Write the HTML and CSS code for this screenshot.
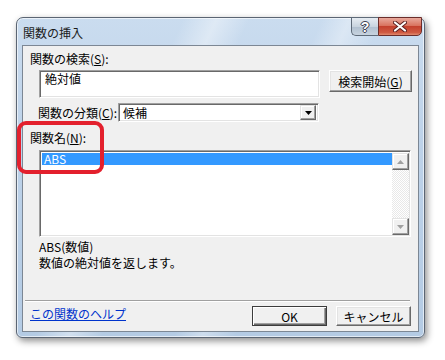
FILE: index.html
```html
<!DOCTYPE html>
<html lang="ja">
<head>
<meta charset="utf-8">
<link rel="stylesheet" href="styles.css">
</head>
<body>
<div class="page">
  <div class="window">
    <div class="titlebar">
      <span class="title">関数の挿入</span>
      <div class="caption-btns">
        <div class="cbtn help">?</div>
        <div class="cbtn close">
          <svg width="14" height="11" viewBox="0 0 14 11"><path d="M2 1.5 L12 9.5 M12 1.5 L2 9.5" stroke="#5a2020" stroke-width="4" stroke-linecap="round"/><path d="M2 1.5 L12 9.5 M12 1.5 L2 9.5" stroke="#fff" stroke-width="2.2" stroke-linecap="round"/></svg>
        </div>
      </div>
    </div>
    <div class="content">
      <div class="label l1">関数の検索(<u>S</u>):</div>
      <div class="row search-row">
        <div class="textbox sunken">絶対値</div>
        <div class="btn search-btn">検索開始(<u>G</u>)</div>
      </div>
      <div class="row cat-row">
        <div class="label cat-label">関数の分類(<u>C</u>):</div>
        <div class="select sunken">
          <span class="sel-text">候補</span>
          <div class="drop-btn"><svg width="7" height="4" viewBox="0 0 7 4"><path d="M0 0 H7 L3.5 4 Z" fill="#000"/></svg></div>
        </div>
      </div>
      <div class="label l2">関数名(<u>N</u>):</div>
      <div class="listbox sunken">
        <div class="items">
          <div class="item selected">ABS</div>
        </div>
        <div class="scrollbar">
          <div class="sbtn"><svg width="7" height="4" viewBox="0 0 7 4"><path d="M3.5 0 L7 4 H0 Z" fill="#a0a0a0"/></svg></div>
          <div class="track"></div>
          <div class="sbtn"><svg width="7" height="4" viewBox="0 0 7 4"><path d="M0 0 H7 L3.5 4 Z" fill="#a0a0a0"/></svg></div>
        </div>
      </div>
      <div class="desc">
        <div class="desc-line">ABS(数値)</div>
        <div class="desc-line">数値の絶対値を返します。</div>
      </div>
      <div class="separator"></div>
      <div class="footer">
        <a class="help-link">この関数のヘルプ</a>
        <div class="btn ok">OK</div>
        <div class="btn cancel">キャンセル</div>
      </div>
    </div>
  </div>
  <div class="annotation"></div>
</div>
</body>
</html>
```

FILE: styles.css
```css
* { box-sizing: border-box; }
html, body {
  margin: 0;
  padding: 0;
  background: #ffffff;
  width: 445px;
  height: 360px;
  overflow: hidden;
  font-family: "Noto Sans CJK JP", "Liberation Sans", sans-serif;
  font-size: 12px;
  color: #000;
}
.page {
  position: relative;
  padding: 17px 0 0 16px;
  width: 445px;
  height: 360px;
}
.window {
  width: 409px;
  height: 321px;
  border: 1px solid #5b6573;
  border-radius: 7px 7px 6px 6px;
  padding: 0 5px 5px 5px;
  display: flex;
  flex-direction: column;
  background:
    linear-gradient(115deg, rgba(255,255,255,0) 30%, rgba(255,255,255,0.4) 36%, rgba(255,255,255,0) 42%, rgba(255,255,255,0) 55%, rgba(255,255,255,0.35) 60%, rgba(255,255,255,0) 66%),
    linear-gradient(180deg, #cadcef 0%, #bdd2e9 40%, #b4cbe4 100%);
  box-shadow: 2px 3px 7px rgba(0,0,0,0.45), inset 0 0 0 1px rgba(255,255,255,0.6);
}
.titlebar {
  height: 27px;
  display: flex;
  align-items: center;
  flex-shrink: 0;
}
.title {
  padding-left: 1px;
  padding-top: 1px;
  font-size: 12px;
  color: #1a1a1a;
}
.caption-btns {
  margin-left: auto;
  margin-right: -3px;
  align-self: flex-start;
  margin-top: -1px;
  display: flex;
}
.cbtn {
  height: 19px;
  display: flex;
  align-items: center;
  justify-content: center;
  border: 1px solid #5e6a78;
}
.help {
  width: 27px;
  border-right: none;
  border-radius: 0 0 0 5px;
  background: linear-gradient(180deg, #e6ecf2 0%, #c9d4df 50%, #b0bfcf 51%, #c7d3df 100%);
  color: #ffffff;
  font-family: "Liberation Sans", sans-serif;
  font-weight: bold;
  font-size: 14px;
  text-shadow: 0 0 1px #334, 1px 0 0 #445, -1px 0 0 #445, 0 1px 0 #445, 0 -1px 0 #445;
}
.close {
  width: 44px;
  border-color: #6b2d2a;
  border-radius: 0 0 5px 0;
  background: linear-gradient(180deg, #e9a99c 0%, #d9735f 45%, #c4412e 50%, #cf5a42 85%, #e08b6f 100%);
}
.content {
  flex: 1;
  background: #f0f0f0;
  border: 1px solid #7c8794;
  display: flex;
  flex-direction: column;
}
.label { line-height: 14px; height: 14px; white-space: nowrap; }
.l1 { margin: 6px 0 0 7px; }
.row { display: flex; }
.sunken {
  background: #fff;
  border-top: 1px solid #a0a0a0;
  border-left: 1px solid #a0a0a0;
  border-right: 1px solid #ffffff;
  border-bottom: 1px solid #ffffff;
  box-shadow: inset 1px 1px 0 #696969, inset -1px -1px 0 #e3e3e3;
}
.search-row { margin: 4px 0 0 16px; align-items: flex-start; height: 28px; }
.textbox {
  width: 281px;
  height: 28px;
  padding: 1px 0 0 5px;
  line-height: 14px;
}
.btn {
  display: flex;
  align-items: center;
  justify-content: center;
  background: #f0f0f0;
  border-top: 1px solid #ffffff;
  border-left: 1px solid #ffffff;
  border-right: 1px solid #696969;
  border-bottom: 1px solid #696969;
  box-shadow: inset -1px -1px 0 #a0a0a0, inset 1px 1px 0 #e3e3e3;
  white-space: nowrap;
}
.search-btn {
  margin-left: 9px;
  width: 83px;
  height: 22px;
}
.cat-row { margin: 5px 0 0 15px; align-items: center; height: 19px; }
.cat-label { width: 80px; }
.select {
  width: 201px;
  height: 19px;
  display: flex;
  align-items: center;
  padding: 0 2px 0 4px;
}
.sel-text { flex: 1; line-height: 14px; }
.drop-btn {
  width: 16px;
  height: 15px;
  display: flex;
  align-items: center;
  justify-content: center;
  background: #f0f0f0;
  border-top: 1px solid #e3e3e3;
  border-left: 1px solid #e3e3e3;
  border-right: 1px solid #696969;
  border-bottom: 1px solid #696969;
  box-shadow: inset -1px -1px 0 #a0a0a0, inset 1px 1px 0 #fff;
}
.l2 { margin: 9px 0 0 7px; }
.listbox {
  margin: 5px 0 0 16px;
  width: 372px;
  height: 87px;
  display: flex;
  padding: 2px 1px 1px 2px;
}
.items { flex: 1; }
.item {
  height: 12px;
  line-height: 12px;
  padding-left: 2px;
  font-size: 12px;
}
.selected { background: #3399ff; color: #fff; }
.scrollbar {
  width: 17px;
  display: flex;
  flex-direction: column;
}
.sbtn {
  height: 17px;
  display: flex;
  align-items: center;
  justify-content: center;
  background: #f0f0f0;
  border-top: 1px solid #e3e3e3;
  border-left: 1px solid #e3e3e3;
  border-right: 1px solid #696969;
  border-bottom: 1px solid #696969;
  box-shadow: inset -1px -1px 0 #a0a0a0, inset 1px 1px 0 #fff;
}
.track {
  flex: 1;
  background-color: #f4f4f4;
  background-image: repeating-conic-gradient(#ffffff 0 25%, #e8e8e8 0 50%);
  background-size: 2px 2px;
}
.desc {
  margin: 2px 0 0 16px;
}
.desc-line { height: 16px; line-height: 16px; }
.separator {
  margin: auto 8px 0 2px;
  height: 2px;
  border-top: 1px solid #a0a0a0;
  border-bottom: 1px solid #ffffff;
}
.footer {
  display: flex;
  align-items: center;
  height: 29px;
  padding: 4px 0 5px 7px;
}
.help-link {
  color: #0033cc;
  text-decoration: underline;
  margin-right: auto;
  margin-top: -4px;
  line-height: 14px;
}
.ok, .cancel {
  width: 75px;
  height: 20px;
}
.ok {
  border: 1px solid #3c3c3c;
  box-shadow: inset 1px 1px 0 #fff, inset -1px -1px 0 #696969, inset -2px -2px 0 #a0a0a0;
}
.cancel { margin: 0 7px 0 9px; }
.annotation {
  position: absolute;
  left: 17px;
  top: 121px;
  width: 87px;
  height: 53px;
  border: 4px solid #e3202d;
  border-radius: 9px;
}
```
